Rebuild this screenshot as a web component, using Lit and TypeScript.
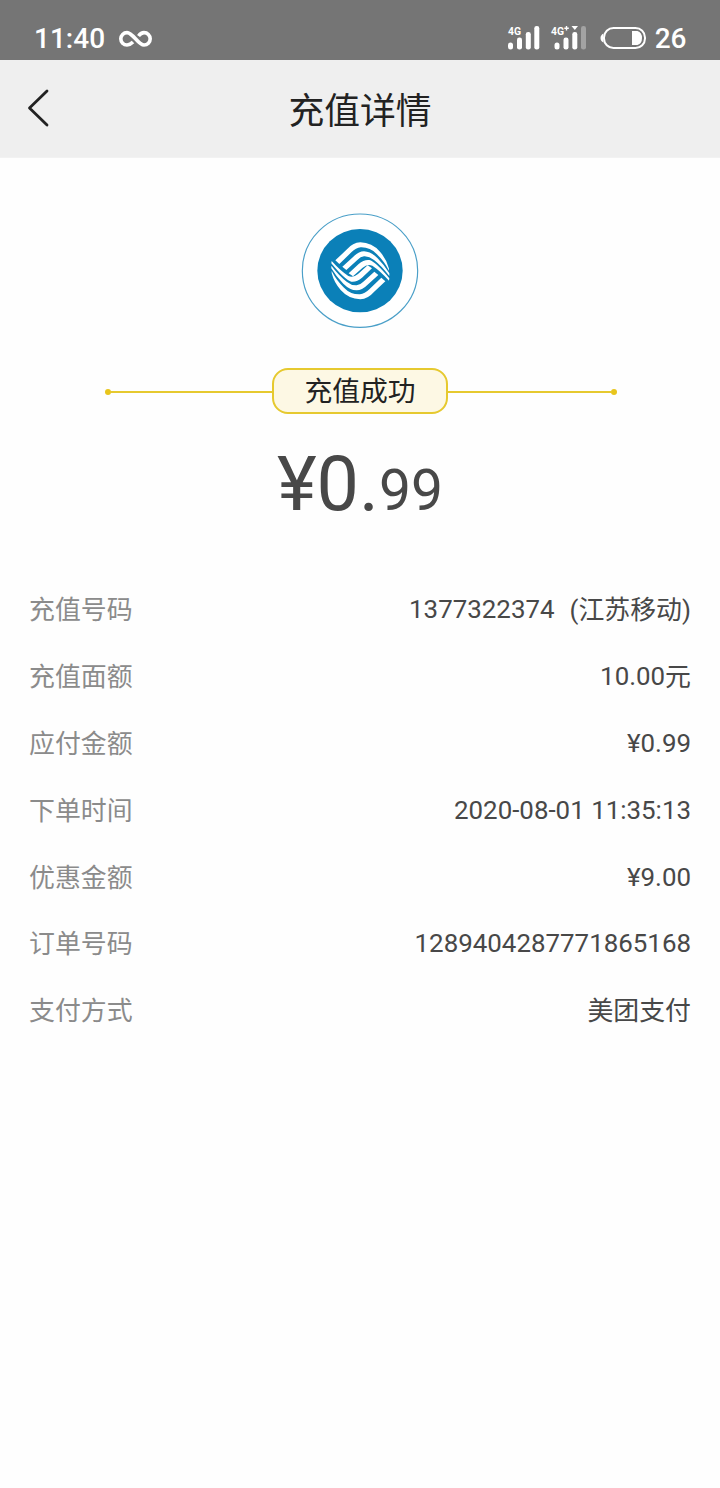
import { LitElement, html, css, svg } from "lit";
import { customElement } from "lit/decorators.js";

const rows: [string, string, string?][] = [
  ["充值号码", "1377322374", "(江苏移动)"],
  ["充值面额", "10.00", "元"],
  ["应付金额", "¥0.99"],
  ["下单时间", "2020-08-01 11:35:13"],
  ["优惠金额", "¥9.00"],
  ["订单号码", "1289404287771865168"],
  ["支付方式", "", "美团支付"],
];

/* Upper half of the carrier emblem; the lower half is the same shape turned by 180 degrees. */
const half = svg`
  <path d="M136 181 L171 148 Q188 128 211 127 Q246 128 270 155 Q290 178 297 206 L297 212 Q283 184 260 162 Q240 141 212 142 Q198 143 184 157 L148 192 Z"/>
  <path d="M157 200 L190 170 Q206 154 222 154 Q243 155 262 174 Q284 196 298 220 L298 228 Q274 197 252 180 Q237 168 222 169 Q212 170 202 180 L169 210 Z"/>
  <path d="M176 220 L206 192 Q222 178 238 180 Q256 184 298 235 L297 242 Q270 212 247 197 Q232 191 218 203 L189 229 Z"/>`;

@customElement("app-root")
export class AppRoot extends LitElement {
  static styles = css`
    :host {
      display: flex;
      flex-direction: column;
      height: 1488px;
      background: #fefefe;
      font-family: Roboto, "Noto Sans CJK SC", sans-serif;
      color: #484848;
    }
    svg { display: block; flex: none; }
    .status {
      display: flex;
      box-sizing: border-box;
      height: 60px;
      padding: 17px 33.500px 0 34px;
      background: #757575;
      color: #fff;
      font-size: 28px;
      font-weight: 500;
      line-height: 44px;
    }
    .infinity { margin: 12px 0 0 14px; }
    .signals { margin: 5px 0 0 auto; }
    .level { margin-left: 8.500px; }
    .header {
      display: grid;
      grid-template-columns: 72px 1fr 72px;
      height: 98px;
      background: #efefef;
      border-bottom: 1px solid #f2f2f2;
      box-sizing: border-box;
    }
    .back { margin: 28px 0 0 26px; }
    .title {
      margin: 0;
      color: #222;
      font-size: 35.8px;
      font-weight: 400;
      line-height: 104px;
      height: 97px;
      text-align: center;
    }
    .logo { margin: 42px auto 0; }
    .result {
      display: flex;
      align-items: center;
      width: 512px;
      margin: 28px 0 0 105px;
    }
    .dot { width: 6px; height: 6px; margin-top: 1px; border-radius: 50%; background: #e8c51c; }
    .line { flex: 1; height: 2px; margin-top: 1px; background: #e6c92f; }
    .line.start { flex: 0 0 161px; }
    .pill {
      box-sizing: border-box;
      width: 176px;
      height: 46px;
      border: 2px solid #e6c92f;
      border-radius: 16px;
      background: #fdf8e4;
      color: #222;
      font-size: 27.8px;
      line-height: 43px;
      text-align: center;
    }
    .price {
      margin-top: 25px;
      height: 91px;
      font-size: 75.5px;
      line-height: 90px;
      text-align: center;
    }
    .cents { font-size: 57px; }
    .rows { margin: 46px 29px 0; }
    .row {
      display: flex;
      justify-content: space-between;
      height: 66.9px;
      font-size: 25.9px;
      line-height: 67px;
    }
    .value { display: flex; }
    .label { padding-top: 1px; color: #8b8b8b; }
    .suffix { padding-top: 1px; }
    .suffix.spaced { margin-left: 15px; }
  `;

  render() {
    return html`
      <div class="status">
        <span class="time">11:40</span>
        <svg class="infinity" width="34" height="20" viewBox="0 0 34 20" fill="none" stroke="#fff" stroke-width="3.6">
          <path d="M14 13 Q11 16 8 16 A6.200 6.200 0 0 1 8 3.600 C14 3.600 19 16 25 16 A6.200 6.200 0 0 0 25 3.600 Q22 3.600 19.500 7"/>
        </svg>
        <svg class="signals" width="140" height="34" viewBox="507 22 140 34" fill="#fff">
          <g font-size="11.500" font-weight="700"><text x="509" y="35" textLength="13" lengthAdjust="spacingAndGlyphs">4G</text><text x="552" y="35" textLength="13" lengthAdjust="spacingAndGlyphs">4G</text></g>
          <path d="M567.500 26v4.500M565.300 28.200h4.500" stroke="#fff" stroke-width="1.400"/>
          <path d="M572.500 26h6.500l-3.200 4z"/>
          <rect x="509" y="42.500" width="5" height="7" rx="2.500"/><rect x="518" y="37.500" width="5" height="12" rx="2.300"/><rect x="526.800" y="32" width="5" height="17.500" rx="2.300"/><rect x="535.300" y="26" width="5" height="23.500" rx="2.300"/>
          <rect x="555.500" y="42.500" width="5" height="7" rx="2.500"/><rect x="564.500" y="37.500" width="5" height="12" rx="2.300"/><rect x="573.300" y="32" width="5" height="17.500" rx="2.300"/><rect x="582" y="26" width="5" height="23.500" rx="2.300" fill="#a3a3a3"/>
          <rect x="605" y="28" width="41" height="20" rx="9.500" fill="none" stroke="#fff" stroke-width="2"/>
          <path d="M604.500 33.500q-3 1.500-3 4.500t3 4.500z"/>
          <path d="M633 31h5.500q4.500 1.500 4.500 7t-4.500 7h-5.500z"/>
        </svg>
        <span class="level">26</span>
      </div>
      <div class="header">
        <svg class="back" width="24" height="40" viewBox="0 0 24 40" fill="none" stroke="#222" stroke-width="2.800" stroke-linecap="round" stroke-linejoin="round"><path d="M21 3 L3.500 20 L21 37"/></svg>
        <h1 class="title">充值详情</h1>
      </div>
      <svg class="logo" width="140" height="140" viewBox="0 0 420 420">
        <ellipse cx="210" cy="212" rx="173" ry="170" fill="#fff" stroke="#4a9fc8" stroke-width="3.500"/>
        <ellipse cx="210" cy="212" rx="128" ry="125" fill="#0b80b8"/>
        <g fill="#fff">${half}<g transform="rotate(180 211 212.500)">${half}</g></g>
      </svg>
      <div class="result">
        <span class="dot"></span><span class="line start"></span>
        <span class="pill">充值成功</span>
        <span class="line"></span><span class="dot"></span>
      </div>
      <div class="price">¥0.<span class="cents">99</span></div>
      <div class="rows">
        ${rows.map(([label, value, suffix]) => html`
          <div class="row">
            <span class="label">${label}</span>
            <span class="value">${value}${suffix ? html`<span class="suffix ${suffix.startsWith("(") ? "spaced" : ""}">${suffix}</span>` : ""}</span>
          </div>`)}
      </div>`;
  }
}
